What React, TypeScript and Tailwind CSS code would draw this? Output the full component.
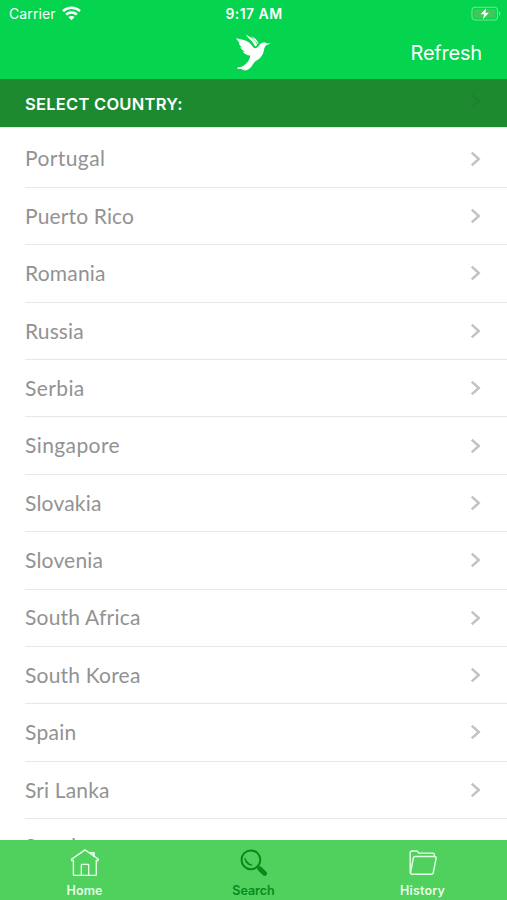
import React, { useState } from 'react';

type Country = {
  name: string;
  spacing: string;
};

type TabName = 'Home' | 'Search' | 'History';

const countries: Country[] = [
  { name: 'Portugal', spacing: 'tracking-[0.4px]' },
  { name: 'Puerto Rico', spacing: 'tracking-[0.15px]' },
  { name: 'Romania', spacing: 'tracking-[0.2px]' },
  { name: 'Russia', spacing: 'tracking-[0.1px]' },
  { name: 'Serbia', spacing: 'tracking-[0.4px]' },
  { name: 'Singapore', spacing: 'tracking-[0.4px]' },
  { name: 'Slovakia', spacing: 'tracking-[0.2px]' },
  { name: 'Slovenia', spacing: 'tracking-[0.2px]' },
  { name: 'South Africa', spacing: 'tracking-[0.2px]' },
  { name: 'South Korea', spacing: 'tracking-[0.2px]' },
  { name: 'Spain', spacing: 'tracking-[0.3px]' },
  { name: 'Sri Lanka', spacing: 'tracking-[0.15px]' },
  { name: 'Sweden', spacing: 'tracking-[0.3px]' },
];

const WifiIcon = () => (
  <svg width="19" height="15" viewBox="0 0 19 15" fill="none" stroke="white" strokeWidth="2.5">
    <path d="M1 5.1C5.8.6 13.2.6 18 5.1" />
    <path d="M4.1 8.5c3.1-2.8 7.7-2.8 10.8 0" />
    <path d="M6.4 11.1c1.8-1.6 4.4-1.6 6.2 0L9.5 14.2z" fill="white" stroke="none" />
  </svg>
);

const BatteryIcon = () => (
  <svg width="30" height="16" viewBox="0 0 30 16" fill="none">
    <rect x="1" y="1.2" width="25.5" height="12.8" rx="3.2" stroke="#74e590" strokeWidth="1.1" />
    <rect x="3" y="3.2" width="21.5" height="8.8" rx="1.5" fill="#42c75e" />
    <path d="M28 5.3v4.6c1.8-.8 1.8-3.8 0-4.6z" fill="#74e590" />
    <path d="M15.2 2.2 9.6 8.3h3.5l-1.2 5 6-6.5h-3.7z" fill="white" />
  </svg>
);

const BirdIcon = () => (
  <svg width="36" height="38" viewBox="0 0 36 38" fill="white">
    <path d="M1.2 4.2c4 1.2 9.3 1.6 12.8 4.2 3.2 2.4 3.9 5.3 5.7 5.7 1.5.3 2.9-.6 4.1-2 1.2-2.1 2.8-3.5 5-3.5 1.4 0 2.2.5 3.1.7l4 .1-4.3 1.5c-2 1.4-2.3 3.4-2.7 5.6-.8 4.4-3.2 7.8-7.3 10.1-3 1.7-3.6 3.8-5.1 5.9-2 2.7-4.3 3.9-7.6 4.3l1.3-1.2-3.7.7 1.2-1.3-4.5-.1c-1.5-.4-1.1-1.5.1-1.6 5.5-.2 9.6-4.6 11.5-9.3.3-.9.5-1.7.3-2.4-3.3-.4-5.8-1.9-7.2-3.9l2.6.4c-3-1.6-4.7-3.4-5.3-5.4l2.6 1C5.2 12.1 4 10.4 3.9 8.5l2.1 1.1C3.5 8 2 6.2 1.2 4.2z" />
    <path d="M11 .6c4.2 2.8 9.4 4.4 11.1 10.4l-1.5 1.6c-1.3-1-1.9-3.3-3.7-5.1C14.7 5.2 12.6 4 11 .6z" />
    <path d="M16.4 2c2.8 2 5.7 3.8 7 7.2l-.6 1.1c-1.5-3.4-4.3-4.9-6.4-8.3z" />
  </svg>
);

const ChevronIcon = ({ color }: { color: string }) => (
  <svg width="12" height="16" viewBox="0 0 12 16" fill="none" stroke={color} strokeWidth="2.4">
    <path d="m1.7 1.6 7.1 6.4-7.1 6.4" />
  </svg>
);

const HomeIcon = () => (
  <svg width="30" height="30" viewBox="0 0 30 30" fill="none" stroke="currentColor" strokeWidth="1.4" strokeLinejoin="round" strokeLinecap="round">
    <path d="M3.4 12.3v14.4q0 .7.7.7h21.5q.7 0 .7-.7V12.3" />
    <path d="m2.1 12.9-.7-1.6L15 1.9l13.5 9.4-.8 1.6" />
    <path d="M20.4 4.8h3.6v3.5" strokeWidth="1.7" />
    <path d="M11.3 27V17q0-.7.7-.7h6q.7 0 .7.7v10" strokeWidth="1.3" />
  </svg>
);

const SearchIcon = () => (
  <svg width="30" height="30" viewBox="0 0 30 30" fill="none" stroke="currentColor">
    <circle cx="11.9" cy="11.8" r="9.4" strokeWidth="2" />
    <path d="M5.9 10c.1 4.7 3.2 7.4 7.2 7.2-2.8-.9-5.3-3-7.2-7.2z" fill="currentColor" strokeWidth=".8" />
    <path d="m18.5 18.4 2.5 2.5" strokeWidth="2.2" />
    <path d="m20.8 20.8 4.9 4.6" strokeWidth="4.8" strokeLinecap="round" />
  </svg>
);

const HistoryIcon = () => (
  <svg width="30" height="30" viewBox="0 0 30 30" fill="none" stroke="currentColor" strokeWidth="1.4" strokeLinejoin="round">
    <path d="M2.2 25V4.8Q2.2 3 4 3h4.5q1.3 0 1.7 1.2l.4.9h14.3q1.5 0 1.5 1.8v1.5" />
    <path d="m5.3 10-2.7 14.3q-.4 2 1.6 2h19.2q1.5 0 1.8-1.5l2.9-14.3q.3-2-1.6-2H7.3q-1.6 0-2 1.5z" />
  </svg>
);

const tabs: { name: TabName; icon: React.ReactNode; spacing: string }[] = [
  { name: 'Home', icon: <HomeIcon />, spacing: 'tracking-[0.05px]' },
  { name: 'Search', icon: <SearchIcon />, spacing: 'tracking-[0px]' },
  { name: 'History', icon: <HistoryIcon />, spacing: 'tracking-[0.15px]' },
];

const App = () => {
  const [activeTab, setActiveTab] = useState<TabName>('Search');

  return (
    <div className="flex h-[900px] w-[507px] flex-col overflow-hidden bg-white font-['Inter',sans-serif]">
      {/* Status bar and navigation */}
      <header className="h-[79px] shrink-0 bg-[#04d44e] text-white">
        <div className="grid h-7 grid-cols-3 items-center pl-[9px] pr-[6px]">
          <div className="-mt-[2px] flex items-center gap-[6px]">
            <span className="text-[14px] tracking-[0.1px]">Carrier</span>
            <WifiIcon />
          </div>
          <span className="-mt-[2px] -ml-[2px] text-center text-[14px] font-semibold tracking-[0.45px] whitespace-nowrap">9:17 AM</span>
          <div className="flex justify-end"><BatteryIcon /></div>
        </div>
        <div className="grid h-[50px] grid-cols-3 items-center px-[25px]">
          <span />
          <span className="flex justify-center"><BirdIcon /></span>
          <button className="text-right text-[20px] tracking-[-0.2px]">Refresh</button>
        </div>
      </header>

      <div className="relative flex h-[49px] shrink-0 items-center border-b border-[#d5f3dc] bg-[#1d8a30] pl-[25px] pt-[2px]">
        <h1 className="text-[16.5px] font-semibold tracking-[0.25px] text-white">SELECT COUNTRY:</h1>
        <span className="absolute top-[14px] right-[25px]"><ChevronIcon color="#1b832d" /></span>
      </div>

      <ul className="min-h-0 flex-1 overflow-hidden pt-[2.4px]">
        {countries.map((country) => (
          <li key={country.name} className="group ml-[25px] flex h-[57.4px] items-center justify-between border-b border-[#e7e7e7] pr-[25px]">
            <span className={`-mt-[1px] font-['Lato',sans-serif] text-[21px] text-[#929292] group-last:-mt-[4px] ${country.spacing}`}>{country.name}</span>
            <ChevronIcon color="#c2c2c4" />
          </li>
        ))}
      </ul>

      <nav className="grid h-[60px] shrink-0 grid-cols-3 bg-[#50d05d]">
        {tabs.map((tab) => (
          <button
            key={tab.name}
            onClick={() => setActiveTab(tab.name)}
            className={`flex flex-col items-center pt-[8px] ${activeTab === tab.name ? 'text-[#078a1c]' : 'text-[#e5ffe6]'}`}
          >
            {tab.icon}
            <span className={`mt-[4px] text-[12.5px] leading-[18px] font-semibold ${tab.spacing}`}>{tab.name}</span>
          </button>
        ))}
      </nav>
    </div>
  );
};

export default App;
